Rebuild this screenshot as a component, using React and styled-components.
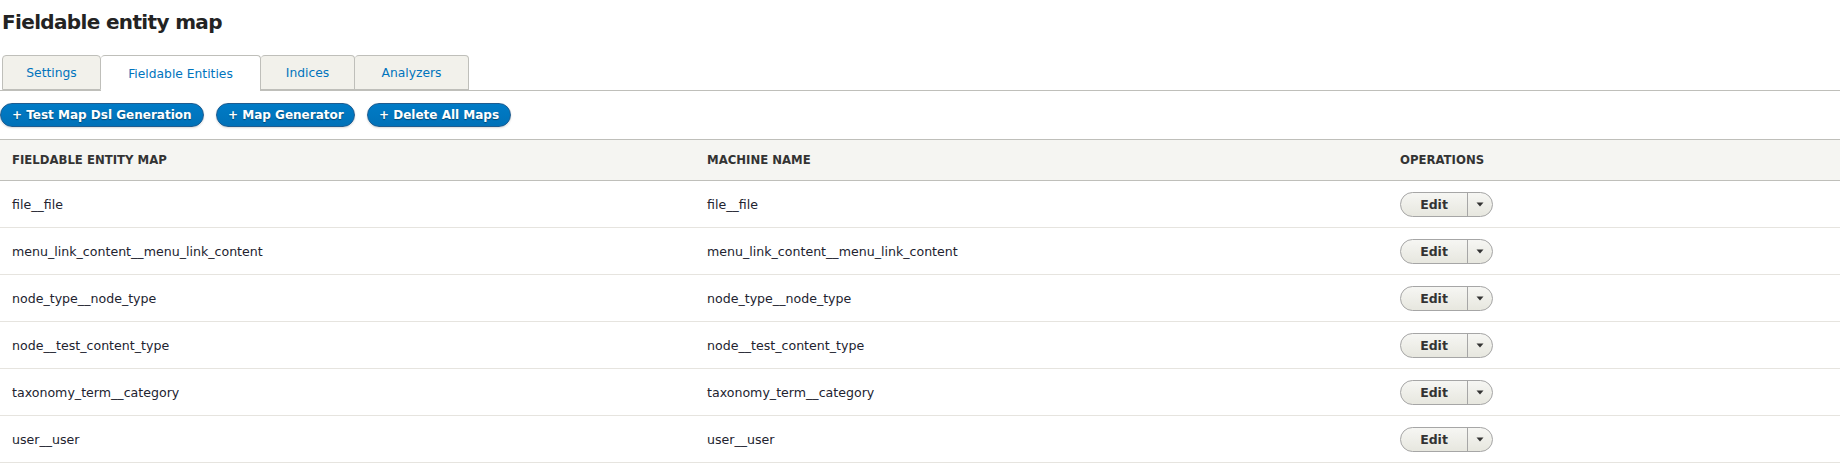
import React from "react";
import styled, { createGlobalStyle } from "styled-components";

const BLUE = "#0074bd";
const TEXT = "#222330";

const GlobalStyle = createGlobalStyle`
  body {
    margin: 0;
    background: #fff;
    font-family: "DejaVu Sans", Verdana, sans-serif;
    color: ${TEXT};
  }
`;

const Page = styled.div`
  width: 1840px;
`;

const Title = styled.h1`
  margin: 0;
  padding: 9px 0 0 2px;
  font-size: 20px;
  line-height: 26px;
  letter-spacing: -0.65px;
  font-weight: bold;
  color: #232323;
`;

const Tabs = styled.ul`
  display: flex;
  list-style: none;
  margin: 20px 0 0;
  padding: 0 0 0 2px;
  border-bottom: 1px solid #bfbfba;
  height: 35px;
`;

const Tab = styled.li`
  width: ${(p) => p.w}px;
  box-sizing: border-box;
  height: ${(p) => (p.active ? 36 : 35)}px;
  display: flex;
  align-items: center;
  justify-content: center;
  border: 1px solid #bfbfba;
  border-bottom: ${(p) => (p.active ? "none" : "1px solid #bfbfba")};
  border-left: ${(p) => (p.first ? "1px solid #bfbfba" : "none")};
  border-radius: 4px 4px 0 0;
  background: ${(p) => (p.active ? "#fff" : "#f2f1eb")};
  color: ${BLUE};
  font-size: 12.3px;
  margin-bottom: -1px;
`;

const ActionBar = styled.div`
  display: flex;
  gap: 12px;
  padding: 12px 0 12px 0;
`;

const ActionButton = styled.button`
  height: 24px;
  box-sizing: border-box;
  padding: 0 12px 0 11px;
  border: 1px solid #1e5c90;
  border-radius: 12px;
  background: linear-gradient(to bottom, #007bc6, #0071b8);
  color: #fff;
  font-family: "DejaVu Sans", Verdana, sans-serif;
  font-size: 12px;
  font-weight: bold;
  text-shadow: 0 1px 1px rgba(0, 0, 0, 0.4);
  box-shadow: 0 1px 2px rgba(0, 0, 0, 0.15);
  cursor: pointer;
  width: ${(p) => p.w}px;
  white-space: nowrap;
`;

const Table = styled.table`
  width: 100%;
  border-collapse: collapse;
  font-size: 12.6px;
`;

const HeadCell = styled.th`
  text-align: left;
  background: #f5f5f2;
  border-top: 1px solid #bfbfba;
  border-bottom: 1px solid #bfbfba;
  height: 41px;
  padding: 0 12px;
  font-size: 11.7px;
  font-weight: bold;
  text-transform: uppercase;
  color: #333;
  width: ${(p) => (p.w ? `${p.w}px` : "auto")};
  box-sizing: border-box;
`;

const Row = styled.tr`
  border-bottom: 1px solid #e6e4df;
`;

const Cell = styled.td`
  height: 46px;
  padding: 0 12px;
  color: ${TEXT};
`;

const SplitButton = styled.div`
  display: inline-flex;
  height: 25px;
  box-sizing: border-box;
  border: 1px solid #a6a6a6;
  border-radius: 13px;
  background: linear-gradient(to bottom, #f6f6f3, #e7e7df);
  overflow: hidden;
  vertical-align: middle;
`;

const EditPart = styled.span`
  width: 66px;
  display: flex;
  align-items: center;
  justify-content: center;
  font-weight: bold;
  font-size: 12.5px;
  color: #333;
  border-right: 1px solid #a6a6a6;
`;

const TogglePart = styled.span`
  width: 24px;
  display: flex;
  align-items: center;
  justify-content: center;
`;

const Caret = () => (
  <svg width="8" height="5" viewBox="0 0 8 5">
    <path d="M0.5 0.5 L7.5 0.5 L4 4.5 Z" fill="#333" />
  </svg>
);

const tabs = [
  { label: "Settings", w: 99 },
  { label: "Fieldable Entities", w: 160, active: true },
  { label: "Indices", w: 94 },
  { label: "Analyzers", w: 114 },
];

const actions = [
  { label: "+ Test Map Dsl Generation", w: 204 },
  { label: "+ Map Generator", w: 139 },
  { label: "+ Delete All Maps", w: 144 },
];

const maps = [
  "file__file",
  "menu_link_content__menu_link_content",
  "node_type__node_type",
  "node__test_content_type",
  "taxonomy_term__category",
  "user__user",
];

const App = () => {
  return (
    <Page>
      <GlobalStyle />
      <Title>Fieldable entity map</Title>
      <Tabs>
        {tabs.map((t, i) => (
          <Tab key={t.label} w={t.w} active={t.active} first={i === 0}>
            {t.label}
          </Tab>
        ))}
      </Tabs>
      <ActionBar>
        {actions.map((a) => (
          <ActionButton key={a.label} w={a.w}>
            {a.label}
          </ActionButton>
        ))}
      </ActionBar>
      <Table>
        <thead>
          <tr>
            <HeadCell w={695}>Fieldable entity map</HeadCell>
            <HeadCell w={693}>Machine name</HeadCell>
            <HeadCell>Operations</HeadCell>
          </tr>
        </thead>
        <tbody>
          {maps.map((m) => (
            <Row key={m}>
              <Cell>{m}</Cell>
              <Cell>{m}</Cell>
              <Cell>
                <SplitButton>
                  <EditPart>Edit</EditPart>
                  <TogglePart>
                    <Caret />
                  </TogglePart>
                </SplitButton>
              </Cell>
            </Row>
          ))}
        </tbody>
      </Table>
    </Page>
  );
};

export default App;
